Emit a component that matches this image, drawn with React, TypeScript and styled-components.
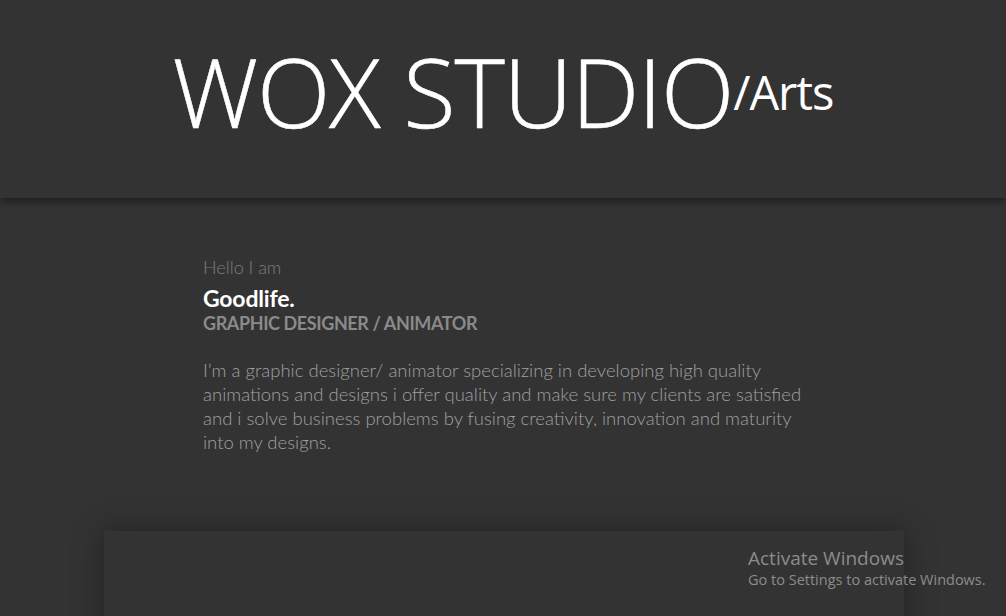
import React from "react";
import styled, { createGlobalStyle } from "styled-components";

const Global = createGlobalStyle`
  html, body { margin: 0; padding: 0; background: #333333; }
  body { font-family: Lato, "Open Sans", sans-serif; overflow: hidden; }
`;

const Page = styled.div`
  position: relative;
  width: 1006px;
  height: 616px;
  overflow: hidden;
  background: #333333;
`;

const Header = styled.header`
  position: relative;
  z-index: 2;
  height: 198px;
  background: #333333;
  box-shadow: 0 3px 8px rgba(0, 0, 0, 0.45);
  display: flex;
  justify-content: center;
  align-items: center;
`;

const Title = styled.h1`
  margin: 0;
  font-family: "Open Sans", sans-serif;
  font-weight: 300;
  font-size: 96px;
  color: #ffffff;
  letter-spacing: -1.2px;
  line-height: 1;
  display: flex;
  align-items: baseline;
  transform: translateY(-8px);
  -webkit-text-stroke: 0.6px #ffffff;
`;

const Sub = styled.span`
  font-weight: 400;
  font-size: 47px;
  letter-spacing: -1px;
  transform: translateY(-18px);
  display: inline-block;
  -webkit-text-stroke: 0;
`;

const Intro = styled.section`
  width: 600px;
  margin: 57px auto 0;
  color: #9a9a9a;
`;

const Hello = styled.p`
  margin: 0;
  font-weight: 300;
  font-size: 18px;
  line-height: 24px;
  color: #7d7d7d;
`;

const Name = styled.h2`
  margin: 7px 0 0;
  font-weight: 700;
  font-size: 23px;
  line-height: 24px;
  color: #ffffff;
  letter-spacing: -0.2px;
`;

const Role = styled.h3`
  margin: 1px 0 0;
  font-weight: 700;
  font-size: 18px;
  line-height: 24px;
  color: #8a8a8a;
  letter-spacing: -0.4px;
`;

const Bio = styled.p`
  margin: 23px 0 0;
  font-weight: 300;
  font-size: 18.5px;
  line-height: 24px;
  color: #a0a0a0;
`;

const Card = styled.div`
  width: 800px;
  height: 200px;
  margin: 77px 0 0 104px;
  background: #333333;
  box-shadow: 0 0 30px rgba(0, 0, 0, 0.35);
`;

const Watermark = styled.div`
  position: absolute;
  left: 748px;
  top: 545px;
  font-family: "Open Sans", sans-serif;
  color: #8c8c8c;
  pointer-events: none;
`;

const WmTitle = styled.div`
  font-size: 19px;
  line-height: 26px;
`;

const WmText = styled.div`
  font-size: 14.5px;
  line-height: 20px;
  margin-top: -1px;
`;

export default function App() {
  return (
    <Page>
      <Global />
      <Header>
        <Title>
          WOX STUDIO<Sub>/Arts</Sub>
        </Title>
      </Header>
      <Intro>
        <Hello>Hello I am</Hello>
        <Name>Goodlife.</Name>
        <Role>GRAPHIC DESIGNER / ANIMATOR</Role>
        <Bio>
          I’m a graphic designer/ animator specializing in developing high quality
          animations and designs i offer quality and make sure my clients are
          satisfied and i solve business problems by fusing creativity, innovation
          and maturity into my designs.
        </Bio>
      </Intro>
      <Card />
      <Watermark>
        <WmTitle>Activate Windows</WmTitle>
        <WmText>Go to Settings to activate Windows.</WmText>
      </Watermark>
    </Page>
  );
}
